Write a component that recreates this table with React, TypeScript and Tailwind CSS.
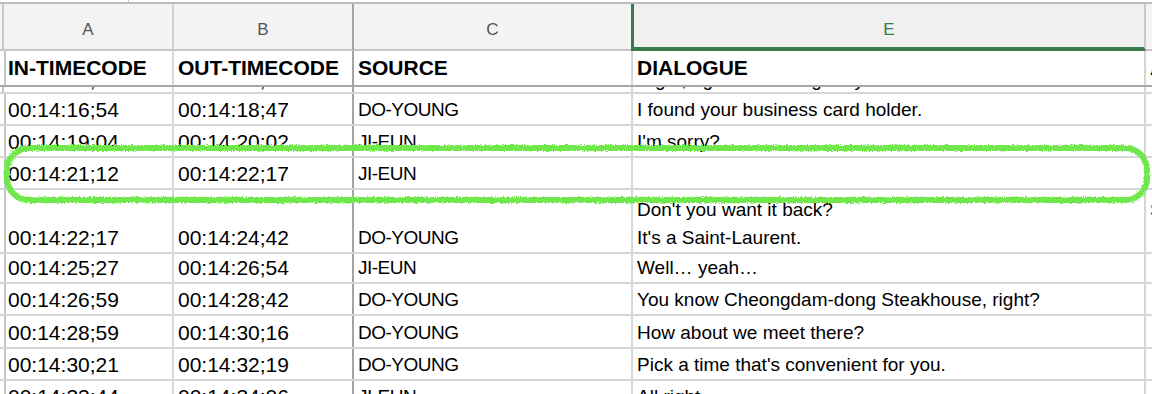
import type { ReactNode } from 'react'

const GRID = 'grid grid-cols-[4px_170px_180px_279px_513px_1fr]'

interface DataRow {
  h: string
  a: string
  b: string
  c: string
  e: string[]
  f?: string[]
}

const rows: DataRow[] = [
  { h: 'h-[32px]', a: '00:14:16;54', b: '00:14:18;47', c: 'DO-YOUNG', e: ['I found your business card holder.'] },
  { h: 'h-[32px]', a: '00:14:19;04', b: '00:14:20;02', c: 'JI-EUN', e: ["I'm sorry?"] },
  { h: 'h-[32px]', a: '00:14:21;12', b: '00:14:22;17', c: 'JI-EUN', e: [] },
  {
    h: 'h-[64px]',
    a: '00:14:22;17',
    b: '00:14:24;42',
    c: 'DO-YOUNG',
    e: ["Don't you want it back?", "It's a Saint-Laurent."],
    f: ['S', '\u00a0'],
  },
  { h: 'h-[30px]', a: '00:14:25;27', b: '00:14:26;54', c: 'JI-EUN', e: ['Well… yeah…'] },
  { h: 'h-[32px]', a: '00:14:26;59', b: '00:14:28;42', c: 'DO-YOUNG', e: ['You know Cheongdam-dong Steakhouse, right?'] },
  { h: 'h-[33px]', a: '00:14:28;59', b: '00:14:30;16', c: 'DO-YOUNG', e: ['How about we meet there?'] },
  { h: 'h-[32px]', a: '00:14:30;21', b: '00:14:32;19', c: 'DO-YOUNG', e: ["Pick a time that's convenient for you."] },
  { h: 'h-[32px]', a: '00:14:33;44', b: '00:14:34;06', c: 'JI-EUN', e: ['All right.'] },
]

function Cell({ className = '', children }: { className?: string; children?: ReactNode }) {
  return (
    <div className={`flex flex-col justify-end overflow-hidden whitespace-nowrap pl-[4px] leading-[28px] ${className}`}>
      {children}
    </div>
  )
}

// hand-drawn green loop around the empty row
function HighlightMark() {
  return (
    <svg className="pointer-events-none absolute left-0 top-0" width="1152" height="394">
      <defs>
        <filter id="rough" x="-5%" y="-50%" width="110%" height="200%">
          <feTurbulence type="fractalNoise" baseFrequency="0.9" numOctaves="2" seed="4" />
          <feDisplacementMap in="SourceGraphic" scale="4" />
        </filter>
      </defs>
      <rect
        x="7"
        y="148"
        width="1140"
        height="52"
        rx="22"
        fill="none"
        stroke="#6fe84c"
        strokeWidth="6"
        filter="url(#rough)"
      />
    </svg>
  )
}

export default function App() {
  return (
    <div className="relative h-[394px] w-[1152px] overflow-hidden bg-white text-black [font-family:'Liberation_Sans',Arial,sans-serif]">
      {/* top strip */}
      <div className="flex h-[4px] border-b-2 border-[#bdbdbd]">
        <div className="w-[129px] border-r border-[#c4c4c4]" />
      </div>

      {/* column letters */}
      <div className={`${GRID} h-[47px] bg-[#f3f3f3] text-[17px] text-[#555]`}>
        <div className="border-b-2 border-r-2 border-[#c6c6c6]" />
        <div className="flex items-center justify-center border-b-2 border-r-2 border-[#d2d2d2] border-b-[#c6c6c6] pt-[6px]">A</div>
        <div className="flex items-center justify-center border-b-2 border-r-2 border-[#a4a4a4] border-b-[#c6c6c6] pt-[6px]">B</div>
        <div className="flex items-center justify-center border-b-2 border-r-2 border-[#d2d2d2] border-b-[#c6c6c6] pt-[6px]">C</div>
        <div className="-ml-[2px] flex items-center justify-center border-b-[4px] border-l-[3px] border-r-2 border-[#3b7a4f] border-r-[#c9c9c9] bg-[#f0f0f0] pt-[8px] text-[#3b7a4f]">
          E
        </div>
        <div className="border-b-2 border-[#c6c6c6]" />
      </div>

      {/* header row (frozen) */}
      <div className={`${GRID} h-[36px] border-b-2 border-[#a8a8a8] text-[21px] font-bold`}>
        <Cell className="border-r-2 border-[#c6c6c6]" />
        <Cell className="border-r-2 border-[#d6d6d6] pb-[3px]">IN-TIMECODE</Cell>
        <Cell className="border-r-2 border-[#a4a4a4] pb-[3px]">OUT-TIMECODE</Cell>
        <Cell className="border-r-2 border-[#d6d6d6] pb-[3px]">SOURCE</Cell>
        <Cell className="border-r-2 border-[#d6d6d6] pb-[3px]">DIALOGUE</Cell>
        <Cell className="pl-[3px] pb-[3px]">A</Cell>
      </div>

      {/* scrolled row, only descenders visible */}
      <div className={`${GRID} h-[7px] border-b-2 border-[#d6d6d6] text-[21px]`}>
        <div className="border-r-2 border-[#c6c6c6]" />
        <div className="overflow-hidden border-r-2 border-[#d6d6d6] pl-[4px] leading-[28px]">
          <div className="-mt-[21px]">00:14:14;59</div>
        </div>
        <div className="overflow-hidden border-r-2 border-[#a4a4a4] pl-[4px] leading-[28px]">
          <div className="-mt-[21px]">00:14:16;39</div>
        </div>
        <div className="overflow-hidden border-r-2 border-[#d6d6d6] pl-[4px] leading-[28px]">
          <div className="-mt-[21px]">DO-YOUNG</div>
        </div>
        <div className="overflow-hidden whitespace-nowrap border-r-2 border-[#d6d6d6] pl-[4px] text-[19px] leading-[28px]">
          <div className="-mt-[21px]">Right, I got something for you.</div>
        </div>
        <div />
      </div>

      {/* data rows */}
      {rows.map((r) => (
        <div key={r.a} className={`${GRID} ${r.h} border-b-2 border-[#d6d6d6]`}>
          <Cell className="border-r-2 border-[#c6c6c6]" />
          <Cell className="border-r-2 border-[#d6d6d6] text-[21px]">{r.a}</Cell>
          <Cell className="border-r-2 border-[#a4a4a4] text-[21px]">{r.b}</Cell>
          <Cell className="border-r-2 border-[#d6d6d6] pl-[3px] text-[19px] tracking-[-0.5px]">{r.c}</Cell>
          <Cell className="border-r-2 border-[#d6d6d6] text-[19px]">
            {r.e.map((line) => (
              <div key={line}>{line}</div>
            ))}
          </Cell>
          <Cell className="pl-[3px] text-[19px]">
            {r.f?.map((line, i) => (
              <div key={i}>{line}</div>
            ))}
          </Cell>
        </div>
      ))}

      <HighlightMark />
    </div>
  )
}
